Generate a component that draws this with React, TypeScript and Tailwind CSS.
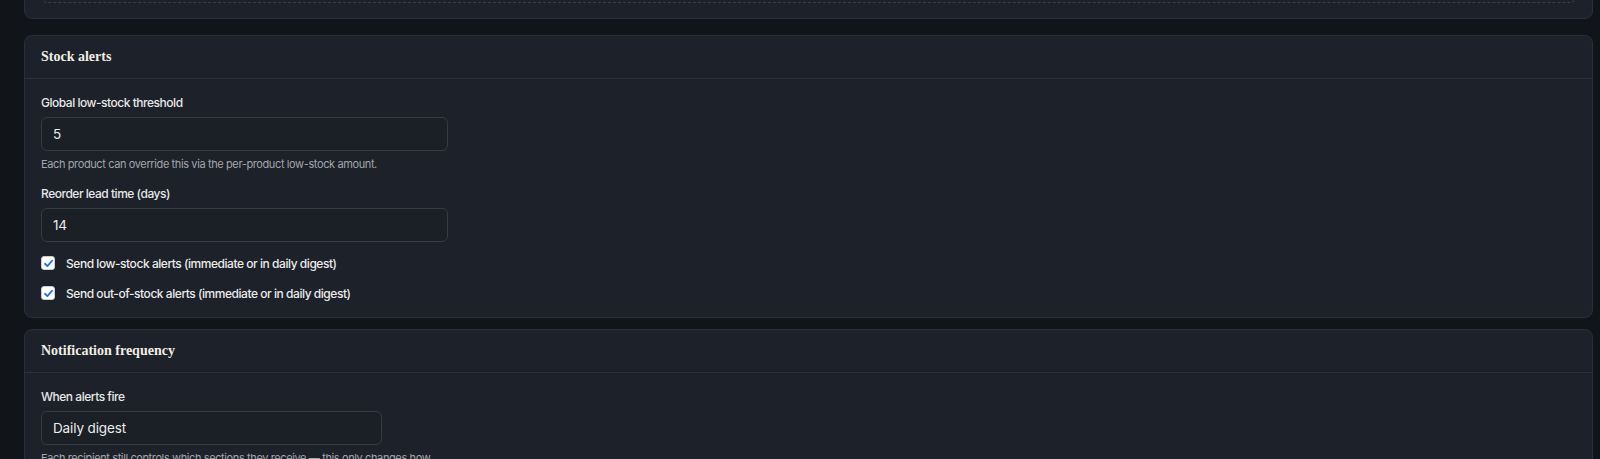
import React from "react";

function Card({ title, className = "", children }: { title: string; className?: string; children: React.ReactNode }) {
  return (
    <section className={`rounded-lg border border-[#2a2f38] bg-[#1d2129] ${className}`}>
      <header className="flex h-[43px] items-center border-b border-[#2a2f38] px-4">
        <h2 className="-translate-y-[1px] font-['Liberation_Serif',serif] text-[14px] font-bold text-[#f1ede6]">{title}</h2>
      </header>
      {children}
    </section>
  );
}

function Field({ label, value, width, help }: { label: string; value: string; width: string; help?: string }) {
  return (
    <div>
      <div className="text-[12px] leading-4 font-medium tracking-[-0.04em] text-[#e8e8e8]">{label}</div>
      <div
        className={`mt-1.5 flex h-[34px] items-center rounded-md border border-[#363b44] bg-[#1b1f26] px-[11px] text-[13.5px] tracking-[-0.01em] text-[#ececec] ${width}`}
      >
        {value}
      </div>
      {help && (
        <p className="mt-[5px] max-w-[400px] text-[11px] leading-4 tracking-[-0.035em] text-[#a3a6ab]">{help}</p>
      )}
    </div>
  );
}

function Check({ label }: { label: string }) {
  return (
    <label className="flex h-5 items-center gap-[11px]">
      <span className="flex h-[14px] w-[14px] -translate-y-[1px] items-center justify-center rounded-[3px] border border-[#c9ccd1] bg-white">
        <svg viewBox="0 0 12 12" className="h-[11px] w-[11px]" fill="none">
          <path d="M2.2 6.3 4.8 8.8 9.9 3" stroke="#1f6fd6" strokeWidth="2" strokeLinecap="round" strokeLinejoin="round" />
        </svg>
      </span>
      <span className="text-[12px] font-medium tracking-[-0.038em] text-[#ebebeb]">{label}</span>
    </label>
  );
}

export default function App() {
  return (
    <div className="min-h-screen overflow-hidden bg-[#111418] pl-6 pr-[7px] font-['Inter',sans-serif]">
      {/* previous card, scrolled mostly out of view */}
      <section className="-mt-[74px] rounded-lg border border-[#2a2f38] bg-[#1d2129] px-4 pt-4 pb-[15px]">
        <div className="h-[60px] rounded-md border border-dashed border-[#3a404a]" />
      </section>

      <Card title="Stock alerts" className="mt-4">
        <div className="px-4 pt-4 pb-[13px]">
          <Field
            label="Global low-stock threshold"
            value="5"
            width="w-[407px]"
            help="Each product can override this via the per-product low-stock amount."
          />
          <div className="mt-[14px]">
            <Field label="Reorder lead time (days)" value="14" width="w-[407px]" />
          </div>
          <div className="mt-3 flex flex-col gap-[10px]">
            <Check label="Send low-stock alerts (immediate or in daily digest)" />
            <Check label="Send out-of-stock alerts (immediate or in daily digest)" />
          </div>
        </div>
      </Card>

      <Card title="Notification frequency" className="mt-[11px]">
        <div className="px-4 pt-4 pb-4">
          <Field
            label="When alerts fire"
            value="Daily digest"
            width="w-[341px]"
            help="Each recipient still controls which sections they receive — this only changes how often the emails go out."
          />
        </div>
      </Card>
    </div>
  );
}
